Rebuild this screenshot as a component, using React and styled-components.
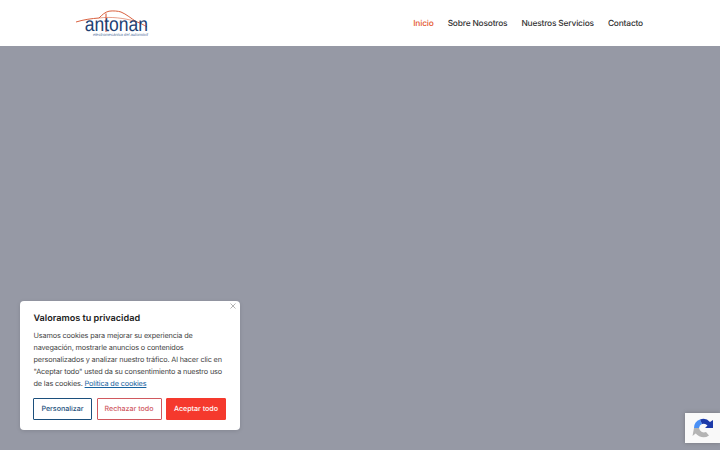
import React from 'react';
import styled, { createGlobalStyle } from 'styled-components';

const GlobalStyle = createGlobalStyle`
  html, body {
    margin: 0;
    padding: 0;
    height: 100%;
    overflow: hidden;
    background: #9699a5;
    font-family: Inter, "Liberation Sans", sans-serif;
    text-rendering: geometricPrecision;
  }
  * { box-sizing: border-box; }
`;

const links = [
  { label: 'Inicio', active: true },
  { label: 'Sobre Nosotros' },
  { label: 'Nuestros Servicios' },
  { label: 'Contacto' },
];

export default function App() {
  return (
    <Page>
      <GlobalStyle />
      <Header>
        <Logo>
          <Roof viewBox="0 0 72 26" aria-hidden="true">
            <path d="M0 12 C8 9.5 16 8.5 23 8 C26 5 29 2 33 1.2 C37 .6 42 1 45 2 C50 4 56 9 60 11.5 C64 13 68 15 71 17" fill="none" stroke="#d9603e" strokeWidth="1" />
            <path d="M23 8 C35 6.5 48 8 60 11.5" fill="none" stroke="#d9603e" strokeWidth="0.6" />
            <path d="M30 3.5 L30 22" fill="none" stroke="#d9603e" strokeWidth="1.1" />
          </Roof>
          <LogoName>antonan</LogoName>
          <LogoTag>electromecánica del automóvil</LogoTag>
        </Logo>
        <Nav>
          {links.map((link) => (
            <NavLink key={link.label} $active={link.active}>{link.label}</NavLink>
          ))}
        </Nav>
      </Header>
      <Hero />
      <CookieCard>
        <CloseMark viewBox="0 0 6 6" aria-hidden="true">
          <path d="M.5 .5 L5.5 5.5 M5.5 .5 L.5 5.5" stroke="#a0a0a0" strokeWidth="0.8" />
        </CloseMark>
        <CookieTitle>Valoramos tu privacidad</CookieTitle>
        <CookieText>
          Usamos cookies para mejorar su experiencia de navegación, mostrarle anuncios o contenidos personalizados y analizar nuestro tráfico. Al hacer clic en "Aceptar todo" usted da su consentimiento a nuestro uso de las cookies. <CookieLink>Política de cookies</CookieLink>
        </CookieText>
        <Buttons>
          <CookieButton $color="#1c4f7c" $width={59}>Personalizar</CookieButton>
          <CookieButton $color="#d0595f" $width={65}>Rechazar todo</CookieButton>
          <CookieButton $color="#f5392d" $fill $width={60}>Aceptar todo</CookieButton>
        </Buttons>
      </CookieCard>
      <Recaptcha>
        <svg width="22" height="22" viewBox="0 0 22 22" aria-hidden="true">
          <path d="M2 11 A9 9 0 0 1 8 2.5 L10 7 A5 5 0 0 0 7 11 Z" fill="#4a90f5" />
          <path d="M8 2.5 A9 9 0 0 1 18 5 L21 3 V11 H13 L15.5 8.5 A5 5 0 0 0 10 7 Z" fill="#1c3aa9" />
          <path d="M2 11 H7 A5 5 0 0 0 14 15 L17 18.5 A9.5 9.5 0 0 1 2 11 Z" fill="#b4b4b4" />
          <path d="M2 11 L0.5 19 L8 13 Z" fill="#b4b4b4" />
        </svg>
      </Recaptcha>
    </Page>
  );
}

const Page = styled.div`
  position: relative;
  width: 720px;
  height: 450px;
  overflow: hidden;
  display: flex;
  flex-direction: column;
  background: #9699a5;
`;

const Header = styled.header`
  height: 46px;
  flex: none;
  background: #fff;
  display: flex;
  align-items: center;
  justify-content: space-between;
  padding: 0 77px 0 76px;
`;

const Logo = styled.div`
  position: relative;
  width: 72px;
  height: 27px;
  display: flex;
  flex-direction: column;
  justify-content: flex-end;
  align-items: flex-end;
`;

const Roof = styled.svg`
  position: absolute;
  left: 0;
  top: 0;
  width: 72px;
  height: 26px;
`;

const LogoName = styled.div`
  font-family: "Liberation Sans", Arial, sans-serif;
  font-size: 17.5px;
  line-height: 14px;
  color: #1d3f73;
  transform: scaleY(1.15);
  transform-origin: bottom;
`;

const LogoTag = styled.div`
  font-family: "Liberation Sans", Arial, sans-serif;
  font-size: 4.1px;
  font-style: italic;
  line-height: 5px;
  color: #4f6f9c;
  white-space: nowrap;
`;

const Nav = styled.nav`
  display: flex;
  align-items: center;
  gap: 14px;
  padding-top: 1px;
`;

const NavLink = styled.a`
  font-size: 8.4px;
  font-weight: 450;
  letter-spacing: -0.18px;
  line-height: 14px;
  color: ${(props) => (props.$active ? '#e4572e' : '#333')};
  white-space: nowrap;
`;

const Hero = styled.main`
  flex: 1;
  background: #9699a5;
`;

const CookieCard = styled.section`
  position: absolute;
  left: 20px;
  top: 301px;
  width: 220px;
  height: 129px;
  padding: 10px 13px 11px 13.5px;
  background: #fff;
  border-radius: 4px;
  box-shadow: 0 1px 4px rgba(0, 0, 0, 0.12);
  display: flex;
  flex-direction: column;
`;

const CloseMark = styled.svg`
  position: absolute;
  top: 2px;
  right: 4px;
  width: 6px;
  height: 6px;
`;

const CookieTitle = styled.div`
  font-size: 9.1px;
  font-weight: 600;
  line-height: 13px;
  color: #212121;
  margin: 1px 0 4.5px;
`;

const CookieText = styled.p`
  margin: 0 0 8.5px;
  font-size: 7.3px;
  letter-spacing: -0.15px;
  line-height: 12px;
  color: #444;
`;

const CookieLink = styled.a`
  color: #1863a0;
  text-decoration: underline;
`;

const Buttons = styled.div`
  display: flex;
  gap: 4.5px;
  margin-left: -0.5px;
`;

const CookieButton = styled.button`
  width: ${(props) => props.$width}px;
  height: 21.5px;
  padding: 0;
  border: 1.2px solid ${(props) => props.$color};
  border-radius: 1px;
  background: ${(props) => (props.$fill ? props.$color : '#fff')};
  color: ${(props) => (props.$fill ? '#fff' : props.$color)};
  font-family: inherit;
  font-size: 7.1px;
  font-weight: 500;
  text-rendering: geometricPrecision;
  white-space: nowrap;
`;

const Recaptcha = styled.div`
  position: absolute;
  right: 0;
  top: 413px;
  width: 35px;
  height: 30px;
  background: #f9f9f9;
  box-shadow: 0 0 4px rgba(80, 80, 80, 0.45);
  display: flex;
  align-items: center;
  justify-content: flex-start;
  padding-left: 7px;
`;
